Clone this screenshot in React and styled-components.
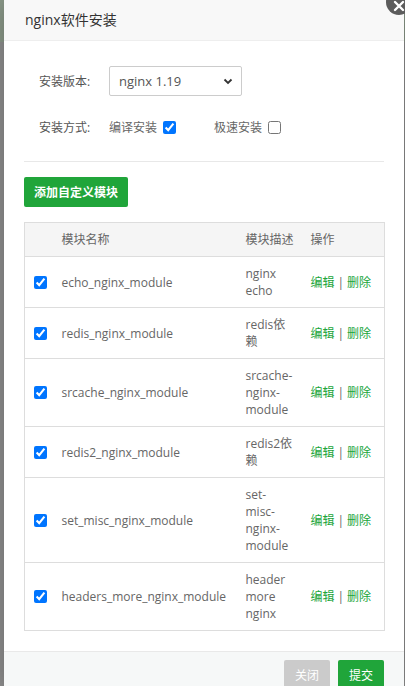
import styled, { createGlobalStyle } from "styled-components"

const GlobalStyle = createGlobalStyle`
  html, body {
    margin: 0;
    padding: 0;
    height: 100%;
    overflow: hidden;
  }
  body {
    background: #8f8f8f;
    font-family: "Open Sans", "Noto Sans CJK SC", sans-serif;
  }
`

const GREEN = "#20a53a"

const modules = [
  { name: "echo_nginx_module", desc: "nginx echo" },
  { name: "redis_nginx_module", desc: "redis依赖" },
  { name: "srcache_nginx_module", desc: "srcache-nginx-module" },
  { name: "redis2_nginx_module", desc: "redis2依赖" },
  { name: "set_misc_nginx_module", desc: "set-misc-nginx-module" },
  { name: "headers_more_nginx_module", desc: "header more nginx" },
]

const Page = styled.div`
  display: flex;
  align-items: flex-start;
  height: 686px;
  overflow: hidden;
  padding-left: 4px;
  background: linear-gradient(to bottom, #8c9a8a 0, #8c9a8a 42px, #8f8f8f 42px);
`

const Modal = styled.div`
  position: relative;
  width: 400px;
  background: #fff;
  display: flex;
  flex-direction: column;
  box-shadow: 1px 1px 24px rgba(0, 0, 0, 0.3);
`

const CloseBtn = styled.div`
  position: absolute;
  right: -8px;
  top: -11px;
  width: 26px;
  height: 26px;
  border-radius: 50%;
  background: #5c5c5c;
  display: flex;
  align-items: center;
  justify-content: center;
  padding-top: 8px;
  box-sizing: border-box;
`

const Header = styled.div`
  height: 40px;
  line-height: 40px;
  padding-left: 21px;
  background: #f8f8f8;
  border-bottom: 1px solid #eee;
  font-size: 14px;
  color: #333;
`

const Body = styled.div`
  padding: 25px 20px 20px 20px;
`

const Form = styled.div`
  padding: 0 15px;
`

const Row = styled.div`
  display: flex;
  align-items: center;
  height: 30px;
  margin-bottom: 16px;
  font-size: 12px;
  color: #555;
  &:last-child {
    margin-bottom: 0;
  }
`

const Label = styled.span`
  width: 70px;
  flex: none;
`

const Select = styled.div`
  width: 133px;
  height: 30px;
  box-sizing: border-box;
  border: 1px solid #ccc;
  border-radius: 2px;
  display: flex;
  align-items: center;
  justify-content: space-between;
  padding: 0 8px 0 9px;
  font-size: 13px;
  color: #555;
`

const Option = styled.label`
  display: flex;
  align-items: center;
  margin-right: 38px;
  color: #666;
`

const Check = styled.input`
  width: 13px;
  height: 13px;
  margin: 0 0 0 ${(p) => (p.$inCell ? 0 : 6)}px;
  accent-color: #0075ff;
  display: block;
`

const Divider = styled.div`
  height: 1px;
  background: #e8e8e8;
  margin: 19px 0 15px;
`

const GreenButton = styled.button`
  height: 30px;
  padding: 0 10px;
  border: none;
  border-radius: 2px;
  background: ${GREEN};
  color: #fff;
  font-family: inherit;
  font-size: 12px;
  font-weight: 600;
`

const Table = styled.table`
  margin-top: 15px;
  width: 360px;
  border-collapse: collapse;
  border: 1px solid #ddd;
  font-size: 12px;
  line-height: 17px;
  color: #666;
  table-layout: fixed;
`

const cellPad = (kind) =>
  kind === "check" ? "8px 0 8px 9px" : kind === "desc" ? "8px 7px 8px 10px" : "8px 10px"

const Th = styled.th`
  box-sizing: border-box;
  background: #f5f5f5;
  font-weight: normal;
  text-align: left;
  padding: ${(p) => cellPad(p.$kind)};
  border-bottom: 1px solid #ddd;
  color: #666;
  white-space: nowrap;
  width: ${(p) => p.$w}px;
`

const Td = styled.td`
  padding: ${(p) => cellPad(p.$kind)};
  vertical-align: middle;
  word-wrap: break-word;
  white-space: ${(p) => (p.$kind === "name" ? "nowrap" : "normal")};
`

const Tr = styled.tr`
  border-bottom: 1px solid #ddd;
`

const Link = styled.span`
  color: ${GREEN};
`

const Sep = styled.span`
  color: #666;
  margin: 0 3px;
`

const Footer = styled.div`
  height: 40px;
  border-top: 1px solid #e9e9e9;
  background: #f6f8f8;
  display: flex;
  justify-content: flex-end;
  padding: 8px 20px 0;
  gap: 8px;
  box-sizing: border-box;
`

const FootButton = styled.button`
  width: 46px;
  height: 30px;
  border: none;
  border-radius: 2px;
  background: ${(p) => (p.$gray ? "#cbcbcb" : GREEN)};
  color: #fff;
  font-family: inherit;
  font-size: 12px;
`

function App() {
  return (
    <>
      <GlobalStyle />
      <Page>
        <Modal>
          <CloseBtn>
            <svg width="12" height="12" viewBox="0 0 12 12">
              <path d="M2 2 L10 10 M10 2 L2 10" stroke="#fff" strokeWidth="2.4" strokeLinecap="round" />
            </svg>
          </CloseBtn>
          <Header>nginx软件安装</Header>
          <Body>
            <Form>
              <Row>
                <Label>安装版本:</Label>
                <Select>
                  <span>nginx 1.19</span>
                  <svg width="10" height="7" viewBox="0 0 10 7">
                    <path d="M1.5 1.5 L5 5 L8.5 1.5" stroke="#333" strokeWidth="1.8" fill="none" />
                  </svg>
                </Select>
              </Row>
              <Row>
                <Label>安装方式:</Label>
                <Option>编译安装<Check type="checkbox" defaultChecked /></Option>
                <Option>极速安装<Check type="checkbox" /></Option>
              </Row>
            </Form>
            <Divider />
            <GreenButton>添加自定义模块</GreenButton>
            <Table>
              <thead>
                <tr>
                  <Th $kind="check" $w={27}></Th>
                  <Th $kind="name" $w={184}>模块名称</Th>
                  <Th $kind="desc" $w={65}>模块描述</Th>
                  <Th $kind="op" $w={84}>操作</Th>
                </tr>
              </thead>
              <tbody>
                {modules.map((m) => (
                  <Tr key={m.name}>
                    <Td $kind="check"><Check type="checkbox" defaultChecked $inCell /></Td>
                    <Td $kind="name">{m.name}</Td>
                    <Td $kind="desc">{m.desc}</Td>
                    <Td $kind="op">
                      <Link>编辑</Link>
                      <Sep>|</Sep>
                      <Link>删除</Link>
                    </Td>
                  </Tr>
                ))}
              </tbody>
            </Table>
          </Body>
          <Footer>
            <FootButton $gray>关闭</FootButton>
            <FootButton>提交</FootButton>
          </Footer>
        </Modal>
      </Page>
    </>
  )
}

export default App
